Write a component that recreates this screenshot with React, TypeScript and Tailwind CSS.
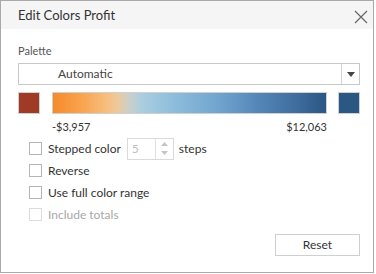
import React from "react";

const Check = ({ label, disabled }: { label: React.ReactNode; disabled?: boolean }) => (
  <div className="flex items-center h-[13px]">
    <span
      className={
        "w-[13px] h-[13px] border bg-white shrink-0 " +
        (disabled ? "border-[#dcdcdc]" : "border-[#b5b5b5]")
      }
    />
    <span className={"ml-[6px] text-[12px] " + (disabled ? "text-[#a8a8a8]" : "text-[#333]")}>
      {label}
    </span>
  </div>
);

const App: React.FC = () => {
  return (
    <div className="w-[376px] h-[274px] bg-white" style={{ fontFamily: "Lato, 'Open Sans', sans-serif" }}>
      <div className="w-[374px] h-[273px] border border-[#a9a9a9] flex flex-col">
        <div className="h-[28px] bg-[#f5f5f5] flex items-center justify-between pl-[17px] pr-[5px]">
          <span className="text-[13px] text-[#333] mt-[2px]">Edit Colors Profit</span>
          <svg width="14" height="14" viewBox="0 0 14 14" className="mt-[3px]">
            <path d="M1 1 L13 13 M13 1 L1 13" stroke="#666" strokeWidth="1.2" />
          </svg>
        </div>

        <div className="pl-[17px] pr-[13px] flex flex-col">
          <div className="text-[11px] text-[#555] mt-[15px] leading-[14px]">Palette</div>

          <div className="mt-[5px] h-[22px] w-[342px] border border-[#c8c8c8] flex items-center">
            <span className="flex-1 pl-[39px] text-[12px] text-[#444]">Automatic</span>
            <span className="w-[18px] h-full border-l border-[#d6d6d6] flex items-center justify-center">
              <svg width="8" height="5" viewBox="0 0 8 5">
                <path d="M0 0 L8 0 L4 5 Z" fill="#444" />
              </svg>
            </span>
          </div>

          <div className="mt-[7px] flex items-center w-[342px] h-[22px]">
            <span className="w-[22px] h-[22px] border border-[#d0d0d0] bg-[#9e3a26]" />
            <span
              className="ml-[12px] w-[275px] h-[22px] border border-[#d0d0d0]"
              style={{
                background:
                  "linear-gradient(90deg, #f68a2b 0%, #f9a24c 10%, #f7bf80 20%, #ecc9a0 24%, #c9d0cc 28%, #a9cde0 33%, #8cbcdb 45%, #72a6d0 60%, #5487b8 75%, #3d6b9c 90%, #2b5685 100%)",
              }}
            />
            <span className="ml-[11px] w-[22px] h-[22px] border border-[#d0d0d0] bg-[#2b5783]" />
          </div>

          <div className="ml-[34px] w-[275px] flex justify-between text-[11px] text-[#333] mt-[6px] leading-[14px]">
            <span>-$3,957</span>
            <span>$12,063</span>
          </div>

          <div className="ml-[11px] flex flex-col gap-[9px] mt-[8px]">
            <div className="flex items-center h-[13px]">
              <Check label="Stepped color" />
              <span className="ml-[6px] w-[47px] h-[22px] border border-[#dadada] flex items-center">
                <span className="flex-1 pl-[4px] text-[12px] text-[#c0c0c0]">5</span>
                <span className="w-[18px] h-full border-l border-[#e0e0e0] flex flex-col items-center justify-center gap-[5px]">
                  <svg width="7" height="4" viewBox="0 0 7 4">
                    <path d="M0 4 L3.5 0 L7 4 Z" fill="#c4c4c4" />
                  </svg>
                  <svg width="7" height="4" viewBox="0 0 7 4">
                    <path d="M0 0 L7 0 L3.5 4 Z" fill="#c4c4c4" />
                  </svg>
                </span>
              </span>
              <span className="ml-[5px] text-[12px] text-[#333]">steps</span>
            </div>
            <Check label="Reverse" />
            <Check label="Use full color range" />
            <Check label="Include totals" disabled />
          </div>

          <div className="flex justify-end mt-[13px]">
            <button className="w-[85px] h-[22px] border border-[#cfcfcf] bg-white text-[12px] text-[#333]">
              Reset
            </button>
          </div>
        </div>
      </div>
    </div>
  );
};

export default App;
